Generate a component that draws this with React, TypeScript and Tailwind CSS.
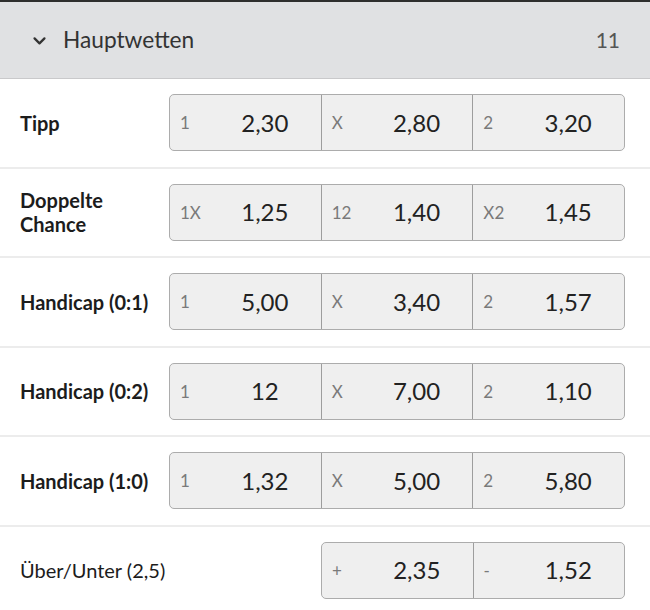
import React from 'react';

type Odd = { label: string; value: string };
type Market = { name: React.ReactNode; odds: Odd[]; regular?: boolean };

const markets: Market[] = [
  { name: 'Tipp', odds: [{ label: '1', value: '2,30' }, { label: 'X', value: '2,80' }, { label: '2', value: '3,20' }] },
  { name: <>Doppelte<br />Chance</>, odds: [{ label: '1X', value: '1,25' }, { label: '12', value: '1,40' }, { label: 'X2', value: '1,45' }] },
  { name: 'Handicap (0:1)', odds: [{ label: '1', value: '5,00' }, { label: 'X', value: '3,40' }, { label: '2', value: '1,57' }] },
  { name: 'Handicap (0:2)', odds: [{ label: '1', value: '12' }, { label: 'X', value: '7,00' }, { label: '2', value: '1,10' }] },
  { name: 'Handicap (1:0)', odds: [{ label: '1', value: '1,32' }, { label: 'X', value: '5,00' }, { label: '2', value: '5,80' }] },
  { name: 'Über/Unter (2,5)', odds: [{ label: '+', value: '2,35' }, { label: '-', value: '1,52' }], regular: true },
];

const OddsBox: React.FC<{ odds: Odd[] }> = ({ odds }) => (
  <div
    className={`flex h-[57px] rounded-[5px] border border-[#acacac] bg-[#efefef] overflow-hidden ${
      odds.length === 3 ? 'w-[456px]' : 'w-[304px]'
    }`}
  >
    {odds.map((o, i) => (
      <div
        key={i}
        className={`flex flex-1 items-center ${i > 0 ? 'border-l border-[#9d9d9d]' : ''}`}
      >
        <span className="w-[40px] pl-[10px] text-[17px] text-[#7a7a7a]">{o.label}</span>
        <span className="flex-1 text-center text-[24px] text-[#222] pr-[1px]">{o.value}</span>
      </div>
    ))}
  </div>
);

export default function App() {
  return (
    <div className="w-[650px] h-[610px] overflow-hidden bg-white" style={{ fontFamily: 'Lato, "Noto Sans", sans-serif' }}>
      <div className="h-[2px] bg-[#2e2e2e]" />
      <div className="flex h-[77px] items-center border-b border-[#c9c9cb] bg-[#e0e1e3] pl-[31px] pr-[30px]">
        <svg width="17" height="17" viewBox="0 0 24 24" fill="none" stroke="#333" strokeWidth="3.2" strokeLinecap="round" strokeLinejoin="round">
          <path d="M5 9l7 7 7-7" />
        </svg>
        <span className="ml-[15px] text-[22.7px] text-[#333]">Hauptwetten</span>
        <span className="ml-auto text-[21px] text-[#555]">11</span>
      </div>
      {markets.map((m, i) => (
        <div key={i} className="flex h-[89.5px] items-center border-b-2 border-[#ececec] pl-[20px] pr-[25px]">
          <div className={`flex-1 text-[20px] leading-[24px] text-[#1c1c1c] ${m.regular ? 'font-normal' : 'font-bold'}`}>
            {m.name}
          </div>
          <OddsBox odds={m.odds} />
        </div>
      ))}
    </div>
  );
}
